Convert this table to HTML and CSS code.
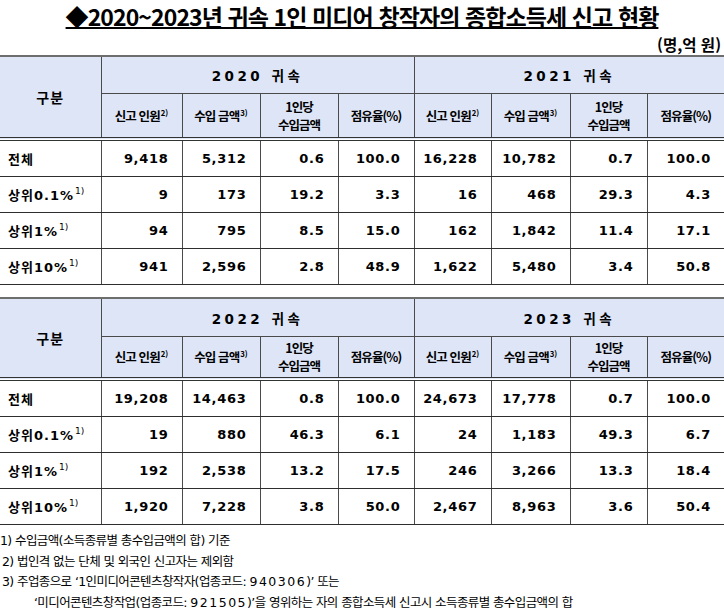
FILE: index.html
```html
<!DOCTYPE html>
<html lang="ko">
<head>
<meta charset="utf-8">
<link rel="stylesheet" href="styles.css">
</head>
<body>
<div class="title"><span class="title-text">◆2020~2023년 귀속 1인 미디어 창작자의 종합소득세 신고 현황</span></div>
<div class="unit">(명,억 원)</div>

<table class="stat t1">
  <colgroup>
    <col class="c0"><col class="c1"><col class="c2"><col class="c3"><col class="c4"><col class="c5"><col class="c6"><col class="c7"><col class="c8">
  </colgroup>
  <thead>
    <tr class="yr">
      <th rowspan="2" class="gubun">구분</th>
      <th colspan="4" class="year">2020 귀속</th>
      <th colspan="4" class="year">2021 귀속</th>
    </tr>
    <tr class="sub">
      <th>신고 인원<span class="sup">2)</span></th>
      <th>수입 금액<span class="sup">3)</span></th>
      <th class="two">1인당<br>수입금액</th>
      <th>점유율(%)</th>
      <th>신고 인원<span class="sup">2)</span></th>
      <th>수입 금액<span class="sup">3)</span></th>
      <th class="two">1인당<br>수입금액</th>
      <th>점유율(%)</th>
    </tr>
  </thead>
  <tbody>
    <tr><td class="lab">전체</td><td>9,418</td><td>5,312</td><td>0.6</td><td>100.0</td><td>16,228</td><td>10,782</td><td>0.7</td><td>100.0</td></tr>
    <tr><td class="lab">상위0.1%<span class="sup">1)</span></td><td>9</td><td>173</td><td>19.2</td><td>3.3</td><td>16</td><td>468</td><td>29.3</td><td>4.3</td></tr>
    <tr><td class="lab">상위1%<span class="sup">1)</span></td><td>94</td><td>795</td><td>8.5</td><td>15.0</td><td>162</td><td>1,842</td><td>11.4</td><td>17.1</td></tr>
    <tr><td class="lab">상위10%<span class="sup">1)</span></td><td>941</td><td>2,596</td><td>2.8</td><td>48.9</td><td>1,622</td><td>5,480</td><td>3.4</td><td>50.8</td></tr>
  </tbody>
</table>

<table class="stat t2">
  <colgroup>
    <col class="c0"><col class="c1"><col class="c2"><col class="c3"><col class="c4"><col class="c5"><col class="c6"><col class="c7"><col class="c8">
  </colgroup>
  <thead>
    <tr class="yr">
      <th rowspan="2" class="gubun">구분</th>
      <th colspan="4" class="year">2022 귀속</th>
      <th colspan="4" class="year">2023 귀속</th>
    </tr>
    <tr class="sub">
      <th>신고 인원<span class="sup">2)</span></th>
      <th>수입 금액<span class="sup">3)</span></th>
      <th class="two">1인당<br>수입금액</th>
      <th>점유율(%)</th>
      <th>신고 인원<span class="sup">2)</span></th>
      <th>수입 금액<span class="sup">3)</span></th>
      <th class="two">1인당<br>수입금액</th>
      <th>점유율(%)</th>
    </tr>
  </thead>
  <tbody>
    <tr><td class="lab">전체</td><td>19,208</td><td>14,463</td><td>0.8</td><td>100.0</td><td>24,673</td><td>17,778</td><td>0.7</td><td>100.0</td></tr>
    <tr><td class="lab">상위0.1%<span class="sup">1)</span></td><td>19</td><td>880</td><td>46.3</td><td>6.1</td><td>24</td><td>1,183</td><td>49.3</td><td>6.7</td></tr>
    <tr><td class="lab">상위1%<span class="sup">1)</span></td><td>192</td><td>2,538</td><td>13.2</td><td>17.5</td><td>246</td><td>3,266</td><td>13.3</td><td>18.4</td></tr>
    <tr><td class="lab">상위10%<span class="sup">1)</span></td><td>1,920</td><td>7,228</td><td>3.8</td><td>50.0</td><td>2,467</td><td>8,963</td><td>3.6</td><td>50.4</td></tr>
  </tbody>
</table>

<div class="notes">
  <p class="n1">1) 수입금액(소득종류별 총수입금액의 합) 기준</p>
  <p class="n2">2) 법인격 없는 단체 및 외국인 신고자는 제외함</p>
  <p class="n2">3) 주업종으로 ‘1인미디어콘텐츠창작자(업종코드: <span class="num">940306</span>)’ 또는</p>
  <p class="n3">‘미디어콘텐츠창작업(업종코드: <span class="num">921505</span>)’을 영위하는 자의 종합소득세 신고시 소득종류별 총수입금액의 합</p>
</div>
</body>
</html>
```
FILE: styles.css
```css
html, body {
  margin: 0;
  padding: 0;
  background: #ffffff;
  color: #000000;
}
body {
  width: 724px;
  overflow: hidden;
  font-family: "Noto Sans CJK KR", "Noto Sans", sans-serif;
}
.title {
  height: 33px;
  text-align: center;
}
.title-text {
  display: inline-block;
  white-space: nowrap;
  font-size: 23px;
  font-weight: 700;
  line-height: 33px;
  letter-spacing: -0.9px;
  text-decoration: underline;
  text-decoration-thickness: 2px;
  text-underline-offset: 1px;
}
.unit {
  height: 22px;
  text-align: right;
  padding-right: 3px;
  font-size: 15.5px;
  font-weight: 700;
  line-height: 22px;
  letter-spacing: 0;
}
.stat {
  width: 724px;
  table-layout: fixed;
  border-collapse: collapse;
  border-top: 2px solid #6e6e6e;
}
.c0 { width: 101px; }
.c1 { width: 81px; }
.c2 { width: 78px; }
.c3 { width: 78px; }
.c4 { width: 76px; }
.c5 { width: 77px; }
.c6 { width: 79px; }
.c7 { width: 77px; }
.c8 { width: 77px; }

.stat th {
  background: #dde5f6;
  font-weight: 700;
  padding: 0;
  border-left: 1px solid #4a4a4a;
  text-align: center;
  vertical-align: middle;
}
.stat th.gubun {
  border-left: none;
  font-size: 14px;
  letter-spacing: 1px;
}
.stat .yr th {
  border-bottom: 1px solid #4a4a4a;
}
.stat .yr th.gubun {
  border-bottom: 4px double #333333;
}
.t1 .yr th { height: 36px; }
.t1 .sub th { height: 43px; }
.t2 .yr th { height: 37px; }
.t2 .sub th { height: 40px; }
.stat th.year {
  font-family: "DejaVu Sans", "Noto Sans CJK KR", sans-serif;
  font-size: 13.5px;
  letter-spacing: 3.5px;
}
.stat .sub th {
  font-size: 12.5px;
  letter-spacing: -0.9px;
  line-height: 18px;
  border-bottom: 4px double #333333;
}
.stat .sub th.two {
  letter-spacing: -1px;
}
.sup {
  font-size: 0.62em;
  vertical-align: 5px;
  line-height: 0;
  letter-spacing: 0;
  margin-left: 1px;
}
.stat td {
  height: 35px;
  padding: 0 13px 0 0;
  border-left: 1px solid #4a4a4a;
  border-bottom: 1px solid #2e2e2e;
  text-align: right;
  vertical-align: middle;
  font-family: "DejaVu Sans", "Noto Sans CJK KR", sans-serif;
  font-size: 13px;
  font-weight: 700;
  letter-spacing: 0.7px;
}
.stat td.lab {
  border-left: none;
  text-align: left;
  padding: 0 0 0 8px;
  letter-spacing: 1px;
}
.stat td.lab .sup {
  font-weight: 400;
  font-size: 0.7em;
  vertical-align: 6px;
}
.t1 { margin-bottom: 12px; }

.notes {
  margin-top: 6px;
  font-family: "DejaVu Sans", "Noto Sans CJK KR", sans-serif;
  font-size: 12.5px;
  letter-spacing: -0.6px;
}
.notes p {
  margin: 0;
  line-height: 20.5px;
  white-space: nowrap;
}
.notes .num { letter-spacing: 1.5px; }
.notes .n1 { padding-left: 0; }
.notes .n2 { padding-left: 2px; }
.notes .n3 { padding-left: 34px; }
```
